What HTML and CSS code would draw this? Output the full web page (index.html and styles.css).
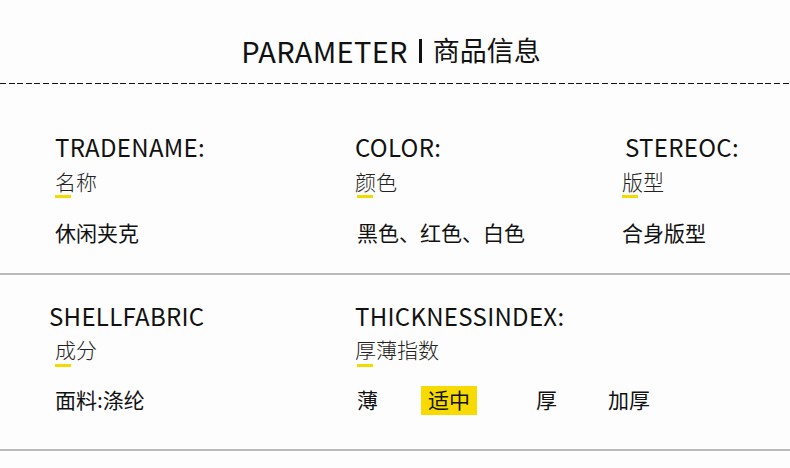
FILE: index.html
```html
<!DOCTYPE html>
<html lang="zh-CN">
<head>
<meta charset="utf-8">
<title>PARAMETER | 商品信息</title>
<link rel="stylesheet" href="styles.css">
</head>
<body>
<div class="page">
  <header class="header">
    <h1 class="title"><span class="title-en">PARAMETER</span><span class="title-bar"></span><span class="title-cn">商品信息</span></h1>
  </header>
  <div class="dash"></div>

  <section class="row row-1">
    <div class="cell">
      <div class="head">TRADENAME:</div>
      <div class="label">名称</div>
      <div class="mark"></div>
      <div class="value">休闲夹克</div>
    </div>
    <div class="cell">
      <div class="head">COLOR:</div>
      <div class="label">颜色</div>
      <div class="mark mark-in"></div>
      <div class="value value-in">黑色、红色、白色</div>
    </div>
    <div class="cell">
      <div class="head head-in">STEREOC:</div>
      <div class="label">版型</div>
      <div class="mark"></div>
      <div class="value">合身版型</div>
    </div>
  </section>
  <div class="rule"></div>

  <section class="row row-2">
    <div class="cell">
      <div class="head head-out">SHELLFABRIC</div>
      <div class="label">成分</div>
      <div class="mark"></div>
      <div class="value">面料:涤纶</div>
    </div>
    <div class="cell cell-wide">
      <div class="head">THICKNESSINDEX:</div>
      <div class="label">厚薄指数</div>
      <div class="mark mark-in"></div>
      <div class="value scale">
        <span class="opt opt-1">薄</span>
        <span class="opt opt-2 opt-on">适中</span>
        <span class="opt opt-3">厚</span>
        <span class="opt opt-4">加厚</span>
      </div>
    </div>
  </section>
  <div class="rule"></div>
</div>
</body>
</html>
```

FILE: styles.css
```css
* { box-sizing: border-box; }
html, body { margin: 0; padding: 0; background: #fdfdfd; }
body {
  font-family: "Noto Sans CJK SC", "Noto Sans", sans-serif;
  color: #111;
  width: 790px;
  height: 468px;
  overflow: hidden;
}
.page { width: 790px; }

.header {
  padding: 35px 0 18px;
  display: flex;
  justify-content: center;
}
.title {
  margin: 0 0 0 -8px;
  font-weight: 400;
  font-size: 29px;
  line-height: 30px;
  height: 30px;
  display: flex;
  align-items: center;
  color: #111;
}
.title-en { letter-spacing: 0.3px; }
.title-bar {
  display: inline-block;
  width: 3px;
  height: 24px;
  background: #111;
  margin: 2px 11px 0 11px;
}
.title-cn { font-size: 27px; }

.dash {
  height: 1px;
  background: repeating-linear-gradient(to right, #111 0 6px, transparent 6px 8.6px);
}

.row {
  display: grid;
  grid-template-columns: 300px 267px 1fr;
  padding-left: 55px;
}
.row-1 { padding-top: 49px; padding-bottom: 27px; }
.row-2 { padding-top: 27px; padding-bottom: 36px; }
.cell-wide { grid-column: 2 / 4; }

.head {
  font-size: 24px;
  line-height: 28px;
  height: 28px;
  font-weight: 400;
  letter-spacing: 0.3px;
  color: #111;
  white-space: nowrap;
}
.head-in { margin-left: 3px; }
.head-out { margin-left: -6px; }

.label {
  margin-top: 7px;
  font-size: 21px;
  line-height: 26px;
  height: 26px;
  font-weight: 300;
  color: #222;
}
.row-2 .label { margin-top: 6px; }

.mark {
  width: 16px;
  height: 3px;
  margin-top: 1px;
  background: #f2dc00;
}
.row-2 .mark { margin-top: 2px; }
.mark-in { margin-left: 2px; }

.value {
  margin-top: 20px;
  font-size: 21px;
  line-height: 28px;
  height: 28px;
  font-weight: 400;
  color: #111;
  white-space: nowrap;
}
.row-2 .value { margin-top: 18px; }
.value-in { margin-left: 2px; }

.scale { display: flex; align-items: flex-start; }
.opt { display: inline-block; line-height: 28px; }
.opt-1 { margin-left: 2px; }
.opt-2 { margin-left: 43px; }
.opt-on {
  background: #f7da00;
  padding: 0 7px;
  height: 29px;
  margin-top: 1px;
  line-height: 27px;
}
.opt-3 { margin-left: 59px; }
.opt-4 { margin-left: 51px; }

.rule {
  height: 2px;
  background: #bababa;
}
```
